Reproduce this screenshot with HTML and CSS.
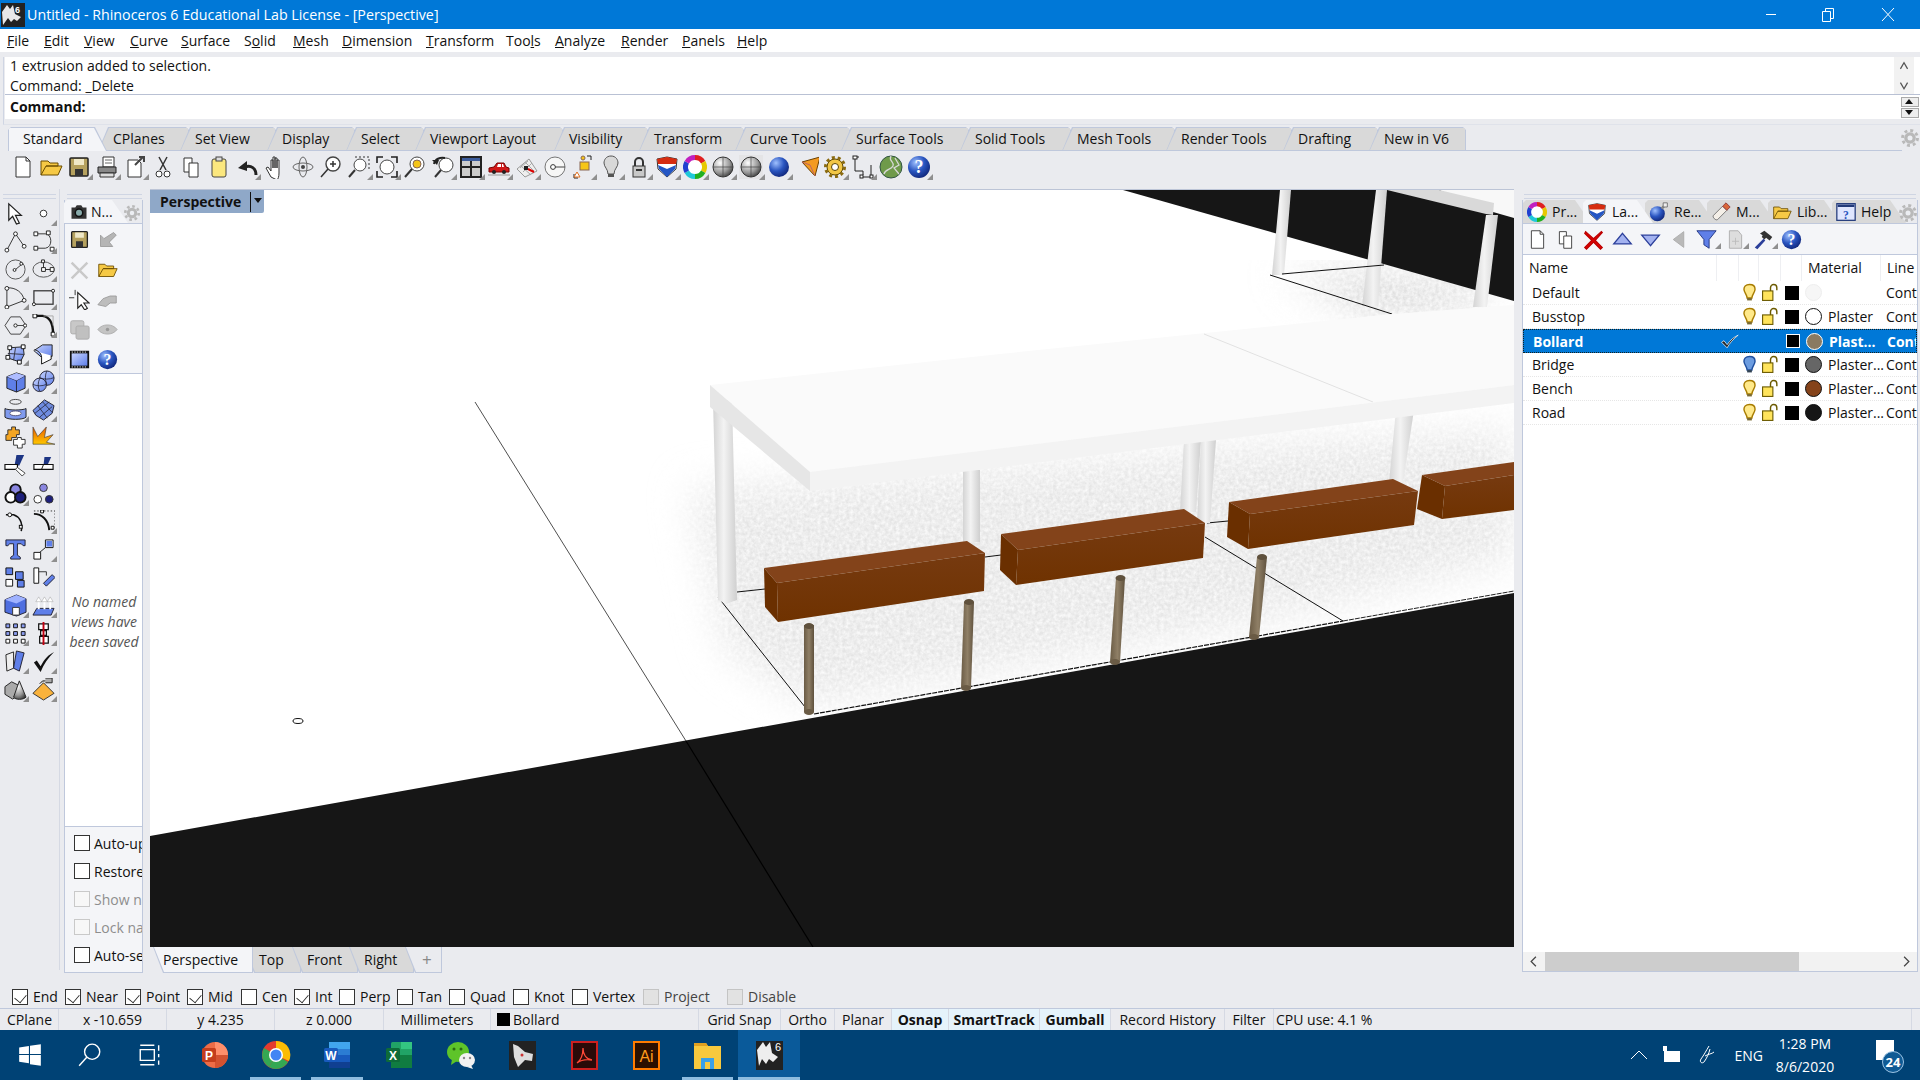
FILE: index.html
```html
<!DOCTYPE html>
<html lang="en">
<head>
<meta charset="utf-8">
<title>Untitled - Rhinoceros 6</title>
<link rel="stylesheet" href="styles.css">
</head>
<body>
<svg class="defs" aria-hidden="true">
<defs>
<radialGradient id="gSph" cx=".35" cy=".3" r=".8"><stop offset="0" stop-color="#9fc0ff"/><stop offset=".5" stop-color="#2a55c0"/><stop offset="1" stop-color="#0c1f70"/></radialGradient>
<radialGradient id="gGray" cx=".35" cy=".3" r=".8"><stop offset="0" stop-color="#fff"/><stop offset=".6" stop-color="#999"/><stop offset="1" stop-color="#333"/></radialGradient>
<linearGradient id="gBlue" x1="0" y1="0" x2="1" y2="1"><stop offset="0" stop-color="#c8d4ff"/><stop offset="1" stop-color="#5f7fe8"/></linearGradient>
<linearGradient id="gOrange" x1="0" y1="0" x2="0" y2="1"><stop offset="0" stop-color="#e85a00"/><stop offset="1" stop-color="#ffc800"/></linearGradient>
<linearGradient id="gPost" x1="0" x2="1" y1="0" y2="0"><stop offset="0" stop-color="#d4d4d4"/><stop offset=".45" stop-color="#f3f3f3"/><stop offset="1" stop-color="#cfcfcf"/></linearGradient>
<linearGradient id="gBench" x1="0" x2="0" y1="0" y2="1"><stop offset="0" stop-color="#763a10"/><stop offset="1" stop-color="#6f3200"/></linearGradient>
<linearGradient id="gPole" x1="0" x2="1" y1="0" y2="0"><stop offset="0" stop-color="#6a5b45"/><stop offset=".5" stop-color="#8f7f66"/><stop offset="1" stop-color="#5f513d"/></linearGradient>
<filter id="soft" x="-30%" y="-30%" width="160%" height="160%"><feGaussianBlur stdDeviation="20" result="b"/><feTurbulence type="fractalNoise" baseFrequency="0.28" numOctaves="3" seed="4" result="n"/><feColorMatrix in="n" type="matrix" values="0 0 0 0 0 0 0 0 0 0 0 0 0 0 0 0 0 0 1.3 0" result="a"/><feComposite in="b" in2="a" operator="in"/></filter>
</defs>
<symbol id="new" viewBox="0 0 24 24"><path d="M5 2h10l4 4v16H5z" fill="#fff" stroke="#333"/><path d="M15 2v4h4" fill="none" stroke="#333"/></symbol>
<symbol id="folder" viewBox="0 0 24 24"><path d="M2 20V6h7l2 2h8v3H7L2 20h17l4-9H7" fill="#f6c945" stroke="#6b4d00"/></symbol>
<symbol id="save" viewBox="0 0 24 24"><rect x="3" y="3" width="18" height="18" rx="1" fill="#b6a25f" stroke="#222" stroke-width="1.5"/><rect x="7" y="4" width="10" height="6" fill="#f0e9c8"/><rect x="8" y="14" width="8" height="7" fill="#333"/></symbol>
<symbol id="print" viewBox="0 0 24 24"><path d="M8 2h11v10H8z" fill="#fff" stroke="#333"/><path d="M3 12h18v6H3z" fill="#888" stroke="#222"/><path d="M5 18h14v4H5z" fill="#ddd" stroke="#333"/><path d="M10 5h7M10 8h7" stroke="#666"/></symbol>
<symbol id="pagearrow" viewBox="0 0 24 24"><path d="M5 5h10l3 3v14H5z" fill="#fff" stroke="#333"/><path d="M12 10l8-8M16 2h5v5" fill="none" stroke="#444" stroke-width="2"/></symbol>
<symbol id="scissors" viewBox="0 0 24 24"><path d="M8 2l7 13M16 2L9 15" stroke="#333" fill="none" stroke-width="1.5"/><circle cx="8" cy="19" r="3" fill="#fff" stroke="#333"/><circle cx="16" cy="19" r="3" fill="#fff" stroke="#333"/></symbol>
<symbol id="copy" viewBox="0 0 24 24"><path d="M5 3h8v14H5z" fill="#fff" stroke="#333"/><path d="M10 8h9v14h-9z" fill="#fff" stroke="#333"/></symbol>
<symbol id="paste" viewBox="0 0 24 24"><rect x="5" y="4" width="14" height="18" rx="2" fill="#fbe77e" stroke="#444"/><rect x="9" y="2" width="6" height="4" fill="#ddd" stroke="#444"/></symbol>
<symbol id="undo" viewBox="0 0 24 24"><path d="M21 20c0-7-5-10-11-8" fill="none" stroke="#222" stroke-width="3"/><path d="M12 6L3 13l9 3z" fill="#222"/></symbol>
<symbol id="hand" viewBox="0 0 24 24"><path d="M8 22l-5-9 2-1 3 4V5h2v8-11h2v11-10h2v10-8h2v13c0 4-1 6-2 7z" fill="#fff" stroke="#333" stroke-linejoin="round"/></symbol>
<symbol id="orbit" viewBox="0 0 24 24"><ellipse cx="12" cy="12" rx="10" ry="4" fill="none" stroke="#666"/><ellipse cx="12" cy="12" rx="4" ry="10" fill="none" stroke="#666"/><circle cx="12" cy="12" r="2" fill="#444"/></symbol>
<symbol id="zoomin" viewBox="0 0 24 24"><circle cx="14" cy="9" r="7" fill="#fff" stroke="#444" stroke-width="1.4"/><path d="M9 14l-7 8M11 9h6M14 6v6" stroke="#333" stroke-width="1.5"/></symbol>
<symbol id="zoomwin" viewBox="0 0 24 24"><circle cx="13" cy="10" r="6" fill="#fff" stroke="#444"/><path d="M8 15l-6 7" stroke="#333" stroke-width="2"/><path d="M8 2h14v12" fill="none" stroke="#333" stroke-dasharray="2 2"/></symbol>
<symbol id="zoomext" viewBox="0 0 24 24"><circle cx="12" cy="12" r="7" fill="#fff" stroke="#444"/><path d="M2 8V2h6M16 2h6v6M22 16v6h-6M8 22H2v-6" fill="none" stroke="#222" stroke-width="1.6"/></symbol>
<symbol id="zoomsel" viewBox="0 0 24 24"><circle cx="14" cy="9" r="7" fill="#fff" stroke="#444"/><circle cx="14" cy="9" r="4" fill="#f5c518" stroke="#865"/><path d="M9 14l-7 8" stroke="#333" stroke-width="2"/></symbol>
<symbol id="undoview" viewBox="0 0 24 24"><circle cx="15" cy="10" r="7" fill="#fff" stroke="#444"/><path d="M10 15l-6 7" stroke="#333" stroke-width="2"/><path d="M3 9c1-5 6-7 11-6" fill="none" stroke="#222" stroke-width="2"/><path d="M1 5l5 5 2-5z" fill="#222"/></symbol>
<symbol id="four" viewBox="0 0 24 24"><rect x="2" y="2" width="20" height="20" fill="#ccc" stroke="#222" stroke-width="2"/><path d="M12 2v20M2 12h20" stroke="#222" stroke-width="2"/><rect x="3" y="3" width="18" height="3" fill="#3c5c9c"/></symbol>
<symbol id="car" viewBox="0 0 24 24"><path d="M2 17v-4l5-1 3-4h7l2 4 3 1v4z" fill="#d01818" stroke="#700"/><path d="M11 9h3v3h-4zM15 9h1l1 3h-2z" fill="#fff"/><circle cx="7" cy="17" r="2" fill="#222"/><circle cx="17" cy="17" r="2" fill="#222"/><path d="M1 20h22" stroke="#999"/></symbol>
<symbol id="gridred" viewBox="0 0 24 24"><path d="M2 14L14 4l8 12-12 6z" fill="#eee" stroke="#999"/><path d="M6 11l10 9M10 7l9 9M8 17l9-9M5 13l8-7" stroke="#aaa"/><rect x="9" y="11" width="4" height="4" fill="#222"/><path d="M13 14l6 3" stroke="#d00" stroke-width="2"/></symbol>
<symbol id="circline" viewBox="0 0 24 24"><circle cx="12" cy="12" r="10" fill="#f6f6f6" stroke="#777"/><path d="M11 12h11" stroke="#444"/><circle cx="10" cy="12" r="2.4" fill="#fff" stroke="#333"/></symbol>
<symbol id="cursel" viewBox="0 0 24 24"><rect x="9" y="7" width="9" height="8" fill="#f5c518" stroke="#865"/><path d="M3 23v-4M3 23h4M16 1h4v4" fill="none" stroke="#222"/><path d="M6 17l3 5H3z" fill="#fff" stroke="#e07020"/><circle cx="12" cy="3" r="2" fill="#f5c518" stroke="#865"/></symbol>
<symbol id="bulbg" viewBox="0 0 24 24"><path d="M12 1c5 0 7 4 7 7 0 4-4 6-4 11H9c0-5-4-7-4-11 0-3 2-7 7-7z" fill="#d8d8d8" stroke="#555"/><rect x="9" y="19" width="6" height="3" fill="#555"/></symbol>
<symbol id="lockg" viewBox="0 0 24 24"><path d="M8 11V7a4 4 0 0 1 8 0v4" fill="none" stroke="#333" stroke-width="2"/><rect x="6" y="11" width="12" height="11" fill="#c8c8c8" stroke="#333"/><rect x="9" y="14" width="6" height="2" fill="#333"/></symbol>
<symbol id="layers" viewBox="0 0 24 24"><path d="M2 4l10-2 10 2-1 10-9 8-9-8z" fill="#fff" stroke="#333"/><path d="M2 4l10-2 10 2-1 5L3 9z" fill="#d62c10"/><path d="M3 10l9 4 9-4-1 4-8 8-8-8z" fill="#2456c4"/></symbol>
<symbol id="wheel" viewBox="0 0 24 24"><circle cx="12" cy="12" r="8.5" fill="#fff"/><g fill="none" stroke-width="5"><path d="M12 2.5a9.5 9.5 0 0 1 8.2 4.7" stroke="#e02020"/><path d="M20.200 7.200a9.500 9.500 0 0 1 0 9.500" stroke="#e6c800"/><path d="M20.200 16.700a9.500 9.500 0 0 1-8.200 4.800" stroke="#20b020"/><path d="M12 21.500a9.500 9.500 0 0 1-8.200-4.800" stroke="#20c8d8"/><path d="M3.800 16.700a9.500 9.500 0 0 1 0-9.500" stroke="#2040d0"/><path d="M3.800 7.200A9.500 9.500 0 0 1 12 2.500" stroke="#c020c0"/></g></symbol>
<symbol id="spg" viewBox="0 0 24 24"><circle cx="12" cy="12" r="10" fill="url(#gGray)" stroke="#333"/><path d="M12 2v20M2 12h20" stroke="#444" stroke-width=".7"/></symbol>
<symbol id="spgg" viewBox="0 0 24 24"><rect x="0" y="0" width="24" height="24" fill="#ddd" opacity=".5"/><circle cx="12" cy="12" r="10" fill="url(#gGray)" stroke="#333"/><path d="M12 2v20M2 12h20" stroke="#444" stroke-width=".7"/></symbol>
<symbol id="spb" viewBox="0 0 24 24"><circle cx="12" cy="12" r="10" fill="url(#gSph)"/></symbol>
<symbol id="bomb" viewBox="0 0 24 24"><circle cx="10" cy="14" r="9" fill="url(#gSph)"/><path d="M15 8l4-4" stroke="#888" stroke-width="3"/><path d="M17 1h5v5h-5z" fill="#eee" stroke="#666"/></symbol>
<symbol id="matl" viewBox="0 0 24 24"><path d="M3 16L14 5l5 5L8 21c-2 2-7-3-5-5z" fill="#f4efe8" stroke="#666"/><path d="M14 5l4-4 5 5-4 4z" fill="#d9663a" stroke="#833"/></symbol>
<symbol id="helpwin" viewBox="0 0 24 24"><rect x="1" y="2" width="22" height="20" fill="#dfe6ff" stroke="#223a7a" stroke-width="1.500"/><rect x="2" y="3" width="20" height="3" fill="#223a7a"/><text x="12" y="20" text-anchor="middle" font-family="Liberation Serif,serif" font-weight="700" font-size="14" fill="#2a55c0">?</text></symbol>
<symbol id="cone" viewBox="-4 0 24 24"><path d="M3 7l18-5-5 19z" fill="#f39a20" stroke="#6b4000"/><path d="M3 7l8 3 5 11" fill="none" stroke="#b66"/></symbol>
<symbol id="gear" viewBox="0 0 24 24"><circle cx="12" cy="12" r="8" fill="#f2c644" stroke="#5a4500"/><circle cx="12" cy="12" r="9.500" fill="none" stroke="#8a6a10" stroke-width="3" stroke-dasharray="3 2.900"/><circle cx="12" cy="12" r="3.500" fill="#fff" stroke="#5a4500"/></symbol>
<symbol id="gearg" viewBox="0 0 24 24"><circle cx="12" cy="12" r="7" fill="#b9b9b9"/><circle cx="12" cy="12" r="9" fill="none" stroke="#b9b9b9" stroke-width="3.500" stroke-dasharray="3.500 3.570"/><circle cx="12" cy="12" r="3" fill="#eceef2"/></symbol>
<symbol id="dim" viewBox="0 0 24 24"><path d="M4 2v14M4 2h4M10 22h12M20 10v12M4 16h8v4" fill="none" stroke="#222"/><rect x="2" y="1" width="4" height="3" fill="#fff" stroke="#222"/><rect x="9" y="20" width="3" height="3" fill="#fff" stroke="#222"/><rect x="19" y="20" width="3" height="3" fill="#fff" stroke="#222"/></symbol>
<symbol id="globe" viewBox="0 0 24 24"><circle cx="12" cy="12" r="11" fill="#6f9a4a" stroke="#354"/><path d="M12 1c-3 5 4 6 2 10s-8 3-9 8M16 3l4 7-5 3 5 6" fill="none" stroke="#d8d8d8" stroke-width="1.300"/></symbol>
<symbol id="help" viewBox="0 0 24 24"><circle cx="12" cy="12" r="11" fill="url(#gSph)"/><text x="12" y="18" text-anchor="middle" font-family="Liberation Serif,serif" font-weight="700" font-size="18" fill="#fff">?</text></symbol>
<symbol id="arrow" viewBox="0 0 24 24"><path d="M5 2v17l4-4 4 8 3-1-4-8h6z" fill="#fff" stroke="#222" stroke-width="1.300"/></symbol>
<symbol id="pt" viewBox="0 0 24 24"><circle cx="12" cy="12" r="3.500" fill="#fff" stroke="#333"/></symbol>
<symbol id="polyline" viewBox="0 0 24 24"><path d="M3 21l9-17 9 13" fill="none" stroke="#333"/><circle cx="3" cy="21" r="2" fill="#fff" stroke="#222"/><circle cx="12" cy="4" r="2" fill="#fff" stroke="#222"/><circle cx="21" cy="17" r="2" fill="#fff" stroke="#222"/></symbol>
<symbol id="curve" viewBox="0 0 24 24"><path d="M4 4h10c7 0 8 14 0 15H4" fill="none" stroke="#333"/><path d="M2 2h4v4H2zM15 1h4v4h-4zM2 17h4v4H2zM19 18h4v4h-4z" fill="#fff" stroke="#222"/></symbol>
<symbol id="circle" viewBox="0 0 24 24"><circle cx="12" cy="12" r="10" fill="none" stroke="#555"/><path d="M12 12l6-5" stroke="#333"/><circle cx="11" cy="12.500" r="1.500" fill="#fff" stroke="#222"/><circle cx="18" cy="6" r="1.500" fill="#fff" stroke="#222"/></symbol>
<symbol id="ellipse" viewBox="0 0 24 24"><ellipse cx="12" cy="12" rx="11" ry="8" fill="none" stroke="#555"/><path d="M12 4v8h9" fill="none" stroke="#333"/><path d="M10 2h3v3h-3zM10 10h4v4h-4zM19 10h4v4h-4z" fill="#fff" stroke="#222"/></symbol>
<symbol id="arc" viewBox="0 0 24 24"><path d="M3 2c9-1 17 5 18 13L3 22z" fill="none" stroke="#333"/><circle cx="3" cy="2.500" r="2" fill="#fff" stroke="#222"/><circle cx="21" cy="15" r="2" fill="#fff" stroke="#222"/><circle cx="3" cy="22" r="2" fill="#fff" stroke="#222"/></symbol>
<symbol id="rect" viewBox="0 0 24 24"><rect x="2" y="5" width="20" height="14" fill="none" stroke="#333" stroke-width="1.300"/><circle cx="2" cy="19" r="1.600" fill="#fff" stroke="#222"/><circle cx="22" cy="5" r="1.600" fill="#fff" stroke="#222"/></symbol>
<symbol id="hex" viewBox="0 0 24 24"><path d="M7 3h10l6 9-6 9H7L1 12z" fill="none" stroke="#444"/><path d="M12 12h10" stroke="#444"/><circle cx="12" cy="12" r="1.700" fill="#fff" stroke="#222"/><circle cx="22" cy="12" r="1.700" fill="#fff" stroke="#222"/></symbol>
<symbol id="fillet" viewBox="0 0 24 24"><path d="M3 2h8c8 1 11 9 11 19" fill="none" stroke="#111" stroke-width="2.500"/><path d="M12 2h10v10" fill="none" stroke="#aaa"/><path d="M1 0h4v4H1zM20 19h4v4h-4z" fill="#fff" stroke="#111"/></symbol>
<symbol id="srf" viewBox="0 0 24 24"><path d="M6 6l14-1 1 8-4 8-12-4z" fill="url(#gBlue)" stroke="#222"/><path d="M12 6l-2 13M4 12l17 1" stroke="#334"/><path d="M4 4h4v4H4zM18 3h4v4h-4zM2 14h4v4H2zM14 19h4v4h-4z" fill="#fff" stroke="#111"/></symbol>
<symbol id="patch" viewBox="0 0 24 24"><path d="M2 9l9-6h10v12l-11 1z" fill="url(#gBlue)" stroke="#222"/><path d="M2 9c0-2 8 1 8 7v7l10-5V14" fill="#fff" stroke="#111"/></symbol>
<symbol id="box" viewBox="0 0 24 24"><path d="M3 7l10-4 9 3v13l-9 4-10-4z" fill="#5f7fe8" stroke="#222"/><path d="M3 7l10 4 9-5M13 11v12" fill="none" stroke="#223"/><path d="M3 7l10-4 9 3-9 5z" fill="#aebcff"/></symbol>
<symbol id="spheres" viewBox="0 0 24 24"><circle cx="15.500" cy="8.500" r="7.500" fill="url(#gBlue)" stroke="#223"/><circle cx="8" cy="15.500" r="7" fill="url(#gBlue)" stroke="#223"/><path d="M1 15c4 2 10 2 14 0M8 9c-2 4-2 9 0 13M8 8c4 2 10 2 15 0M15.500 1c-2 4-2 9 0 14" fill="none" stroke="#223" stroke-width=".8"/></symbol>
<symbol id="cyl" viewBox="0 0 24 24"><ellipse cx="12" cy="4" rx="6" ry="2.500" fill="none" stroke="#444"/><path d="M1 11c3 2 19 2 22 0v9c-3 3-19 3-22 0z" fill="#7f9aee" stroke="#222"/><ellipse cx="12" cy="16" rx="6" ry="2.500" fill="#fff" stroke="#557"/></symbol>
<symbol id="mesh" viewBox="0 0 24 24"><path d="M1 13L13 2l10 6-2 8-9 7-8-5z" fill="#6f8ce0" stroke="#223"/><path d="M6 8l10 13M11 4l10 11M3 16L18 4M8 20L21 9" stroke="#223" stroke-width=".8"/></symbol>
<symbol id="puzzle" viewBox="0 0 24 24"><path d="M4 4h4V1h4v3h4v5h-3v3H8v3H2V9h2z" fill="#f5a623" stroke="#333"/><path d="M10 14h4v-2h4v2h4v5h-3v4h-5v-3h-4z" fill="#fff" stroke="#333"/></symbol>
<symbol id="explode" viewBox="0 0 24 24"><path d="M1 1l5 10 9-10-2 11 9-3-7 8 9 2H1z" fill="url(#gOrange)" stroke="#333" stroke-width=".6"/></symbol>
<symbol id="trim" viewBox="0 0 24 24"><path d="M13 1h8l-5 11h-5z" fill="#1d3584"/><path d="M1 11h13v5H1z" fill="#fff" stroke="#111" stroke-width="1.200"/><path d="M14 14l8 6-3 3-7-7z" fill="#fff" stroke="#444"/></symbol>
<symbol id="split" viewBox="0 0 24 24"><path d="M13 3h7l-4 9h-4z" fill="#1d3584"/><path d="M2 11h20v5H2z" fill="#fff" stroke="#111" stroke-width="1.200"/><path d="M12 11l-2 5" stroke="#111"/></symbol>
<symbol id="group" viewBox="0 0 24 24"><circle cx="12" cy="8" r="5.500" fill="#8a86e0" stroke="#111" stroke-width="2"/><circle cx="7" cy="16" r="5.500" fill="#fff" stroke="#111" stroke-width="2"/><circle cx="17" cy="16" r="5.500" fill="#1d1f7a" stroke="#111" stroke-width="2"/></symbol>
<symbol id="ungroup" viewBox="0 0 24 24"><circle cx="12" cy="6" r="4" fill="#8a86e0" stroke="#333"/><circle cx="6" cy="18" r="4" fill="#fff" stroke="#333"/><circle cx="18" cy="18" r="4" fill="#1d1f7a" stroke="#333"/></symbol>
<symbol id="fcurve" viewBox="0 0 24 24"><path d="M2 5h8c6 2 10 8 8 17" fill="none" stroke="#111" stroke-width="1.600"/><circle cx="6" cy="5" r="2" fill="#fff" stroke="#111"/><rect x="16" y="16" width="3" height="3" fill="#fff" stroke="#111"/></symbol>
<symbol id="chamfer" viewBox="0 0 24 24"><path d="M2 4c8 0 15 6 16 17" fill="none" stroke="#111" stroke-width="2"/><path d="M2 1h22v20" fill="none" stroke="#333" stroke-dasharray="1.500 2"/><path d="M9 0h3v3H9zM20 17h3v3h-3z" fill="#fff" stroke="#111"/></symbol>
<symbol id="txt" viewBox="0 0 24 24"><path d="M2 2h20v6h-2l-2-2h-4v12l3 2v2H7v-2l3-2V6H6L4 8H2z" fill="#5f7fe8" stroke="#223"/></symbol>
<symbol id="scale" viewBox="0 0 24 24"><path d="M2 15h7v7H2zM14 2h8v8h-8z" fill="#fff" stroke="#111"/><rect x="15" y="3" width="6" height="6" fill="#5f7fe8"/><path d="M8 15l6-5" stroke="#222"/></symbol>
<symbol id="array" viewBox="0 0 24 24"><path d="M2 2h7v7H2zM12 6h8v8h-8z" fill="#5f7fe8" stroke="#111"/><path d="M2 14h7v7H2z" fill="#fff" stroke="#111"/><path d="M14 15h7v7h-7z" fill="#5f7fe8" stroke="#111"/></symbol>
<symbol id="rotate" viewBox="0 0 24 24"><path d="M2 2h5v16H2z" fill="#fff" stroke="#111"/><path d="M15 21l-3-3 9-9 3 3z" fill="#5f7fe8" stroke="#223"/><path d="M7 6h8v4" fill="none" stroke="#333"/></symbol>
<symbol id="boxbite" viewBox="0 0 24 24"><path d="M1 6l12-5 10 4v14l-10 4-12-4z" fill="#4f6fe0" stroke="#223"/><path d="M1 6l12 4 10-5-10-4z" fill="#9fb2ff"/><path d="M9 14h7v8H9z" fill="#fff" stroke="#333"/></symbol>
<symbol id="extrude" viewBox="0 0 24 24"><path d="M1 22l4-7h18l-3 7z" fill="#5f7fe8" stroke="#223"/><path d="M7 16V7M13 16V7M19 16V7" stroke="#fff" stroke-width="2"/><path d="M4 8l3-5 3 5zM10 8l3-5 3 5zM16 8l3-5 3 5z" fill="#fff" stroke="#888" stroke-width=".4"/></symbol>
<symbol id="dots" viewBox="0 0 24 24"><g fill="#8a9cf0" stroke="#111"><path d="M2 2h4v4H2zM10 2h4v4h-4zM18 2h4v4h-4zM2 10h4v4H2zM10 10h4v4h-4zM18 10h4v4h-4z"/></g><g fill="#fff" stroke="#111"><path d="M2 18h4v4H2zM10 18h4v4h-4zM18 18h4v4h-4z"/></g></symbol>
<symbol id="mirror" viewBox="0 0 24 24"><path d="M7 2h10v6H7zM9 9h6v5H9zM8 15h9v7H8z" fill="#fff" stroke="#111" stroke-width="1.300"/><path d="M12 0v24" stroke="#c00010" stroke-width="2"/></symbol>
<symbol id="xray" viewBox="0 0 24 24"><path d="M2 5l8-3v17l-7 3z" fill="#eee" stroke="#222"/><path d="M13 1l8 2-5 19-6-3z" fill="#5f7fe8" stroke="#223"/></symbol>
<symbol id="check" viewBox="0 0 24 24"><path d="M2 13l3-2 4 6C13 9 17 5 23 2 17 8 12 15 9 23z" fill="#111"/></symbol>
<symbol id="prims" viewBox="0 0 24 24"><path d="M1 9l7-5 8 4v9l-7 5-8-5z" fill="#aaa" stroke="#222"/><path d="M16 3l7 17c-3 3-11 3-13 0z" fill="url(#gGray)" stroke="#222"/></symbol>
<symbol id="pyr" viewBox="0 0 24 24"><path d="M12 5L1 16l11 7 11-7z" fill="#f9b23c" stroke="#333"/><path d="M8 6l3-3h3M14 0h7v5h-7" fill="#aaa" stroke="#222"/></symbol>
<symbol id="saveg" viewBox="0 0 24 24"><path d="M19 4l3 3-8 8 4 5H4V7l4 4z" fill="#b5b5b5" stroke="#9a9a9a"/></symbol>
<symbol id="xg" viewBox="0 0 24 24"><path d="M4 3l8 8 8-8 2 2-8 8 8 8-2 2-8-8-8 8-2-2 8-8-8-8z" fill="#c9c9c9"/></symbol>
<symbol id="pick" viewBox="0 0 24 24"><path d="M10 4v18l4-4 4 6 3-2-4-6h6z" fill="#fff" stroke="#222" stroke-width="1.300"/><path d="M0 10h6M7 1v6" stroke="#222"/></symbol>
<symbol id="handg" viewBox="0 0 24 24"><path d="M1 18l6-7 8-3h7v8h-7l-5 4z" fill="#bdbdbd" stroke="#999"/></symbol>
<symbol id="squares" viewBox="0 0 24 24"><rect x="2" y="2" width="15" height="15" rx="2" fill="#c8c8c8" stroke="#aaa"/><rect x="8" y="8" width="15" height="15" rx="2" fill="#c0c0c0" stroke="#aaa"/></symbol>
<symbol id="eye" viewBox="0 0 24 24"><path d="M1 12c5-7 17-7 22 0-5 7-17 7-22 0z" fill="#c4c4c4" stroke="#aaa"/><circle cx="12" cy="12" r="2" fill="#999"/></symbol>
<symbol id="film" viewBox="0 0 24 24"><rect x="1" y="2" width="22" height="20" fill="#111"/><rect x="3" y="5" width="18" height="14" fill="url(#gBlue)"/><path d="M3 3.500h18M3 20.500h18" stroke="#fff" stroke-dasharray="1.500 1.500"/></symbol>
<symbol id="cam" viewBox="0 0 24 24"><path d="M2 6h5l2-3h6l2 3h5v15H2z" fill="#333"/><circle cx="12" cy="13" r="5" fill="#8aa" stroke="#111" stroke-width="2"/></symbol>
<symbol id="xred" viewBox="0 0 24 24"><path d="M3 3l9 8 9-8 1 1-8 9 8 8-2 2-8-8-8 8-2-2 8-8-8-8z" fill="#d00" stroke="#b00" stroke-width="1.400"/></symbol>
<symbol id="up" viewBox="0 0 24 24"><path d="M12 5l10 12H2z" fill="#a3b2f0" stroke="#2b3f9a" stroke-width="1.500"/></symbol>
<symbol id="down" viewBox="0 0 24 24"><path d="M12 19L2 7h20z" fill="#a3b2f0" stroke="#2b3f9a" stroke-width="1.500"/></symbol>
<symbol id="leftg" viewBox="0 0 24 24"><path d="M6 12L18 3v18z" fill="#b9b9b9" stroke="#aaa"/></symbol>
<symbol id="filter" viewBox="0 0 24 24"><path d="M1 2h22l-8 10v10l-6-4v-6z" fill="#5f7fe8" stroke="#1b2f7a"/></symbol>
<symbol id="pageg" viewBox="0 0 24 24"><path d="M5 2h10l4 5v15H5z" fill="#ddd" stroke="#aaa"/><path d="M12 10v8M8 14h8" stroke="#bbb"/></symbol>
<symbol id="hammer" viewBox="0 0 24 24"><path d="M2 21l10-10 2 2L5 23z" fill="#2b3f9a"/><path d="M8 5l5-3 9 7-3 4-4-3-2 2-3-3 1-2z" fill="#333"/></symbol>
<symbol id="bulby" viewBox="0 0 24 24"><path d="M12 2c5 0 7 3 7 6 0 4-4 7-4 11H9c0-4-4-7-4-11 0-3 2-6 7-6z" fill="#ffe98a" stroke="#a87c00" stroke-width="1.800"/><rect x="9" y="19" width="6" height="3" fill="#7a6a30"/></symbol>
<symbol id="bulbb" viewBox="0 0 24 24"><path d="M12 2c5 0 7 3 7 6 0 4-4 7-4 11H9c0-4-4-7-4-11 0-3 2-6 7-6z" fill="#6c9ce0" stroke="#1f4f9f" stroke-width="1.800"/><rect x="9" y="19" width="6" height="3" fill="#345"/></symbol>
<symbol id="locky" viewBox="0 0 24 24"><rect x="2" y="10" width="13" height="12" fill="#ffe45c" stroke="#6b5a00" stroke-width="1.400"/><path d="M12 10V6a4 4 0 0 1 8 0v3" fill="none" stroke="#6b5a00" stroke-width="1.800"/></symbol>
<symbol id="okw" viewBox="0 0 24 24"><path d="M2 13l3-2 4 5C13 10 18 6 23 4 17 9 12 14 9 20z" fill="#222" stroke="#fff" stroke-width=".9"/></symbol>
</svg>

<header class="title">
  <svg class="app-ico" viewBox="0 0 24 24"><rect width="24" height="24" fill="#222"/><path d="M2 22L1 9l5-7 3 4 3-4 2 9 6 3-4 4-3-2-3 3-3-4z" fill="#e8e8e8"/><text x="14" y="10" font-size="9" font-family="Liberation Sans,sans-serif" font-weight="700" fill="#fff">6</text></svg>
  <span class="title-text">Untitled - Rhinoceros 6 Educational Lab License - [Perspective]</span>
  <div class="win">
    <svg viewBox="0 0 49 29"><path d="M17 14.500h10" stroke="#fff"/></svg>
    <svg viewBox="0 0 60 29"><path d="M24.500 11.500h8v10h-8zM27.500 11.500v-3h8v10h-3" fill="none" stroke="#fff"/></svg>
    <svg viewBox="0 0 60 29"><path d="M24 8l12 13M36 8L24 21" stroke="#fff" fill="none"/></svg>
  </div>
</header>

<nav class="menu">
  <span><u>F</u>ile</span><span><u>E</u>dit</span><span><u>V</u>iew</span><span><u>C</u>urve</span><span><u>S</u>urface</span><span>S<u>o</u>lid</span><span><u>M</u>esh</span><span><u>D</u>imension</span><span><u>T</u>ransform</span><span>Too<u>l</u>s</span><span><u>A</u>nalyze</span><span><u>R</u>ender</span><span><u>P</u>anels</span><span><u>H</u>elp</span>
</nav>

<section class="cmd">
  <div class="hist">
    <div class="hist-text"><div>1 extrusion added to selection.</div><div>Command: _Delete</div></div>
    <div class="hist-scroll"><svg viewBox="0 0 14 14"><path d="M3 10l4-7 4 7" fill="none" stroke="#555" stroke-width="1.400"/></svg><svg viewBox="0 0 14 14"><path d="M3 4l4 7 4-7" fill="none" stroke="#555" stroke-width="1.400"/></svg></div>
  </div>
  <div class="prompt">
    <b>Command:</b>
    <div class="spin"><i class="sp-u"></i><i class="sp-d"></i></div>
  </div>
</section>

<div class="tabs-row">
  <div class="tabs">
    <span class="tab on">Standard</span><span class="tab">CPlanes</span><span class="tab">Set View</span><span class="tab">Display</span><span class="tab">Select</span><span class="tab">Viewport Layout</span><span class="tab">Visibility</span><span class="tab">Transform</span><span class="tab">Curve Tools</span><span class="tab">Surface Tools</span><span class="tab">Solid Tools</span><span class="tab">Mesh Tools</span><span class="tab">Render Tools</span><span class="tab">Drafting</span><span class="tab last">New in V6</span>
  </div>
  <svg class="tabs-gear"><use href="#gearg"/></svg>
</div>

<div class="tools">
  <span class="t"><svg><use href="#new"/></svg></span><span class="t"><svg><use href="#folder"/></svg></span><span class="t f"><svg><use href="#save"/></svg></span><span class="t f"><svg><use href="#print"/></svg></span><span class="t f"><svg><use href="#pagearrow"/></svg></span><span class="t"><svg><use href="#scissors"/></svg></span><span class="t"><svg><use href="#copy"/></svg></span><span class="t"><svg><use href="#paste"/></svg></span><span class="t f"><svg><use href="#undo"/></svg></span><span class="t"><svg><use href="#hand"/></svg></span><span class="t"><svg><use href="#orbit"/></svg></span><span class="t"><svg><use href="#zoomin"/></svg></span><span class="t f"><svg><use href="#zoomwin"/></svg></span><span class="t f"><svg><use href="#zoomext"/></svg></span><span class="t"><svg><use href="#zoomsel"/></svg></span><span class="t f"><svg><use href="#undoview"/></svg></span><span class="t f"><svg><use href="#four"/></svg></span><span class="t f"><svg><use href="#car"/></svg></span><span class="t f"><svg><use href="#gridred"/></svg></span><span class="t"><svg><use href="#circline"/></svg></span><span class="t f"><svg><use href="#cursel"/></svg></span><span class="t f"><svg><use href="#bulbg"/></svg></span><span class="t f"><svg><use href="#lockg"/></svg></span><span class="t f"><svg><use href="#layers"/></svg></span><span class="t f"><svg><use href="#wheel"/></svg></span><span class="t f"><svg><use href="#spg"/></svg></span><span class="t f"><svg><use href="#spgg"/></svg></span><span class="t f"><svg><use href="#spb"/></svg></span><span class="t"><svg><use href="#cone"/></svg></span><span class="t f"><svg><use href="#gear"/></svg></span><span class="t f"><svg><use href="#dim"/></svg></span><span class="t"><svg><use href="#globe"/></svg></span><span class="t f"><svg><use href="#help"/></svg></span>
</div>

<main class="work">
  <aside class="side">
    <span class="t"><svg><use href="#arrow"/></svg></span><span class="t f"><svg><use href="#pt"/></svg></span>
    <span class="t"><svg><use href="#polyline"/></svg></span><span class="t f"><svg><use href="#curve"/></svg></span>
    <span class="t f"><svg><use href="#circle"/></svg></span><span class="t f"><svg><use href="#ellipse"/></svg></span>
    <span class="t f"><svg><use href="#arc"/></svg></span><span class="t f"><svg><use href="#rect"/></svg></span>
    <span class="t f"><svg><use href="#hex"/></svg></span><span class="t f"><svg><use href="#fillet"/></svg></span>
    <span class="t f"><svg><use href="#srf"/></svg></span><span class="t f"><svg><use href="#patch"/></svg></span>
    <span class="t f"><svg><use href="#box"/></svg></span><span class="t f"><svg><use href="#spheres"/></svg></span>
    <span class="t f"><svg><use href="#cyl"/></svg></span><span class="t f"><svg><use href="#mesh"/></svg></span>
    <span class="t"><svg><use href="#puzzle"/></svg></span><span class="t"><svg><use href="#explode"/></svg></span>
    <span class="t"><svg><use href="#trim"/></svg></span><span class="t"><svg><use href="#split"/></svg></span>
    <span class="t f"><svg><use href="#group"/></svg></span><span class="t"><svg><use href="#ungroup"/></svg></span>
    <span class="t"><svg><use href="#fcurve"/></svg></span><span class="t f"><svg><use href="#chamfer"/></svg></span>
    <span class="t"><svg><use href="#txt"/></svg></span><span class="t f"><svg><use href="#scale"/></svg></span>
    <span class="t"><svg><use href="#array"/></svg></span><span class="t"><svg><use href="#rotate"/></svg></span>
    <span class="t f"><svg><use href="#boxbite"/></svg></span><span class="t f"><svg><use href="#extrude"/></svg></span>
    <span class="t f"><svg><use href="#dots"/></svg></span><span class="t f"><svg><use href="#mirror"/></svg></span>
    <span class="t f"><svg><use href="#xray"/></svg></span><span class="t f"><svg><use href="#check"/></svg></span>
    <span class="t f"><svg><use href="#prims"/></svg></span><span class="t f"><svg><use href="#pyr"/></svg></span>
  </aside>

  <section class="views">
    <div class="p-head">
      <span class="ptab rslant"><svg><use href="#cam"/></svg><span>N...</span></span>
      <svg class="p-gear"><use href="#gearg"/></svg>
    </div>
    <div class="v-tools">
      <span class="t"><svg><use href="#save"/></svg></span><span class="t"><svg><use href="#saveg"/></svg></span>
      <span class="t"><svg><use href="#xg"/></svg></span><span class="t"><svg><use href="#folder"/></svg></span>
      <span class="t"><svg><use href="#pick"/></svg></span><span class="t"><svg><use href="#handg"/></svg></span>
      <span class="t"><svg><use href="#squares"/></svg></span><span class="t"><svg><use href="#eye"/></svg></span>
      <span class="t"><svg><use href="#film"/></svg></span><span class="t"><svg><use href="#help"/></svg></span>
    </div>
    <div class="v-list"><em>No named views have been saved</em></div>
    <div class="v-opts">
      <label class="opt"><i class="box"></i><span>Auto-update</span></label>
      <label class="opt"><i class="box"></i><span>Restore</span></label>
      <label class="opt off"><i class="box"></i><span>Show named</span></label>
      <label class="opt off"><i class="box"></i><span>Lock named</span></label>
      <label class="opt"><i class="box"></i><span>Auto-set</span></label>
    </div>
  </section>

  <section class="center">
    <div class="vp">
      <svg class="scene" viewBox="150 190 1364 757">
        <rect x="150" y="190" width="1364" height="757" fill="#fff"/>
        <clipPath id="ground"><path d="M150 190H1514V593L150 836z"/></clipPath>
        <g clip-path="url(#ground)">
          <path d="M690 490L1300 440 1514 430V560L1250 625 810 705 725 650z" fill="#e4e4e4" filter="url(#soft)"/>
          <path d="M1280 272L1490 285 1480 306 1370 312z" fill="#c8c8c8" filter="url(#soft)"/>
        </g>
        <path d="M150 836L1514 593V947H150z" fill="#161616"/>
        <path d="M1123 190H1514V301z" fill="#161616"/>
        <path d="M1439 190H1514V218L1493 212z" fill="#f8f8f8"/>
        <path d="M1387 190L1439 190 1494 203 1493 215 1486 214z" fill="#d9d9d9"/>
        <path d="M1280 190H1291L1284 275H1272z" fill="url(#gPost)"/>
        <path d="M1376 190H1387L1378 306H1362z" fill="url(#gPost)"/>
        <path d="M1486 215H1498L1487 307H1473z" fill="url(#gPost)"/>
        <path d="M1270 275L1392 314M1282 274L1384 265" stroke="#111" stroke-width="1" fill="none"/>
        <path d="M475 402L686 741" stroke="#222" stroke-width=".8" fill="none"/>
        <path d="M686 741L813 947" stroke="#000" stroke-width="1.200" fill="none"/>
        <ellipse cx="298" cy="721" rx="5" ry="2.500" fill="none" stroke="#111"/>
        <path d="M718 597L805 707M737 592L765 589M985 557L1001 555M1207 523L1228 521M1205 537L1343 621" stroke="#111" stroke-width="1" fill="none"/>
        <path d="M814 714L1343 621" stroke="#111" stroke-width="1.200" stroke-dasharray="5 1" fill="none"/>
        <path d="M1343 621L1514 591" stroke="#222" stroke-width="1" stroke-dasharray="5 1" fill="none"/>
        <path d="M713 400H732L737 600 726 604 718 600z" fill="url(#gPost)"/>
        <path d="M963 470H980V542H963z" fill="url(#gPost)"/>
        <path d="M1184 440H1201L1196 512H1180z" fill="url(#gPost)"/>
        <path d="M1201 440H1216L1210 523H1197z" fill="url(#gPost)"/>
        <path d="M1396 410H1414L1403 482H1389z" fill="url(#gPost)"/>
        <path d="M710 385L1000 354 1392 314 1514 305V385L810 472z" fill="#fafafa"/>
        <path d="M1204 334L1373 402" stroke="#e2e2e2" fill="none"/>
        <path d="M710 385L810 472V491L710 407z" fill="#e6e6e6"/>
        <path d="M810 472L1514 385V403L810 491z" fill="#f3f3f3"/>
        <path d="M764 568L967 541 985 553 777 583z" fill="#83431a"/>
        <path d="M777 583L985 553 984 591 778 622z" fill="url(#gBench)"/>
        <path d="M764 568L777 583 778 622 765 607z" fill="#6a2f00"/>
        <path d="M1001 534L1184 509 1205 523 1018 550z" fill="#83431a"/>
        <path d="M1018 550L1205 523 1203 558 1016 585z" fill="url(#gBench)"/>
        <path d="M1001 534L1018 550 1016 585 1000 570z" fill="#6a2f00"/>
        <path d="M1229 502L1393 479 1418 491 1250 514z" fill="#83431a"/>
        <path d="M1250 514L1418 491 1414 525 1248 549z" fill="url(#gBench)"/>
        <path d="M1229 502L1250 514 1248 549 1227 537z" fill="#6a2f00"/>
        <path d="M1422 475L1514 462V475L1445 486z" fill="#83431a"/>
        <path d="M1445 486L1514 475V510L1442 519z" fill="url(#gBench)"/>
        <path d="M1422 475L1445 486 1442 519 1417 509z" fill="#6a2f00"/>
        <path d="M804 625H814V712L804 712z" fill="url(#gPole)"/>
        <ellipse cx="809" cy="626" rx="5" ry="3" fill="#5f513d"/><ellipse cx="809" cy="712" rx="5" ry="3" fill="#6a5b45"/>
        <path d="M964 602H974L971 688H961z" fill="url(#gPole)"/>
        <ellipse cx="969" cy="602" rx="5" ry="3" fill="#5f513d"/><ellipse cx="966" cy="688" rx="5" ry="3" fill="#6a5b45"/>
        <path d="M1116 578H1125L1120 662H1110z" fill="url(#gPole)"/>
        <ellipse cx="1120.500" cy="578" rx="5" ry="3" fill="#5f513d"/><ellipse cx="1115" cy="662" rx="5" ry="3" fill="#6a5b45"/>
        <path d="M1257 557H1267L1259 637H1249z" fill="url(#gPole)"/>
        <ellipse cx="1262" cy="557" rx="5" ry="3" fill="#5f513d"/><ellipse cx="1254" cy="637" rx="5" ry="3" fill="#6a5b45"/>
      </svg>
      <div class="vp-tag"><b>Perspective</b><span class="vp-drop"></span></div>
    </div>
    <div class="vtabs">
      <span class="vtab on">Perspective</span><span class="vtab">Top</span><span class="vtab">Front</span><span class="vtab">Right</span><span class="vtab plus">+</span>
    </div>
  </section>

  <aside class="layers">
    <div class="l-head">
      <span class="ltab rslant"><svg><use href="#wheel"/></svg><span>Pr...</span></span>
      <span class="ltab rslant on"><svg><use href="#layers"/></svg><span>La...</span></span>
      <span class="ltab rslant"><svg><use href="#bomb"/></svg><span>Re...</span></span>
      <span class="ltab rslant"><svg><use href="#matl"/></svg><span>M...</span></span>
      <span class="ltab rslant"><svg><use href="#folder"/></svg><span>Lib...</span></span>
      <span class="ltab rslant"><svg><use href="#helpwin"/></svg><span>Help</span></span>
      <svg class="l-gear"><use href="#gearg"/></svg>
    </div>
    <div class="l-tools">
      <span class="t"><svg><use href="#new"/></svg></span><span class="t"><svg><use href="#copy"/></svg></span><span class="t"><svg><use href="#xred"/></svg></span><span class="t"><svg><use href="#up"/></svg></span><span class="t"><svg><use href="#down"/></svg></span><span class="t"><svg><use href="#leftg"/></svg></span><span class="t f"><svg><use href="#filter"/></svg></span><span class="t f"><svg><use href="#pageg"/></svg></span><span class="t f"><svg><use href="#hammer"/></svg></span><span class="t"><svg><use href="#help"/></svg></span>
    </div>
    <div class="l-body">
      <div class="row hdr"><span>Name</span><span></span><span></span><span></span><span></span><span class="mat-h">Material</span><span>Line</span></div>
      <div class="row"><span class="nm">Default</span><span></span><svg class="c"><use href="#bulby"/></svg><svg class="c"><use href="#locky"/></svg><i class="sw"></i><span class="mat"><i class="dot d-none"></i></span><span class="ln">Cont</span></div>
      <div class="row"><span class="nm">Busstop</span><span></span><svg class="c"><use href="#bulby"/></svg><svg class="c"><use href="#locky"/></svg><i class="sw"></i><span class="mat"><i class="dot d-white"></i><span>Plaster</span></span><span class="ln">Cont</span></div>
      <div class="row sel"><span class="nm">Bollard</span><svg class="c"><use href="#okw"/></svg><span></span><span></span><i class="sw"></i><span class="mat"><i class="dot d-tan"></i><span>Plast...</span></span><span class="ln">Cont</span></div>
      <div class="row"><span class="nm">Bridge</span><span></span><svg class="c"><use href="#bulbb"/></svg><svg class="c"><use href="#locky"/></svg><i class="sw"></i><span class="mat"><i class="dot d-gray"></i><span>Plaster...</span></span><span class="ln">Cont</span></div>
      <div class="row"><span class="nm">Bench</span><span></span><svg class="c"><use href="#bulby"/></svg><svg class="c"><use href="#locky"/></svg><i class="sw"></i><span class="mat"><i class="dot d-brown"></i><span>Plaster...</span></span><span class="ln">Cont</span></div>
      <div class="row"><span class="nm">Road</span><span></span><svg class="c"><use href="#bulby"/></svg><svg class="c"><use href="#locky"/></svg><i class="sw"></i><span class="mat"><i class="dot d-black"></i><span>Plaster...</span></span><span class="ln">Cont</span></div>
    </div>
    <div class="hscroll">
      <svg viewBox="0 0 22 20"><path d="M13 5l-5 5 5 5" fill="none" stroke="#444" stroke-width="1.300"/></svg>
      <div class="thumb-track"><div class="thumb"></div></div>
      <svg viewBox="0 0 22 20"><path d="M9 5l5 5-5 5" fill="none" stroke="#444" stroke-width="1.300"/></svg>
    </div>
  </aside>
</main>

<div class="osnap">
  <label class="os on"><i class="box"></i>End</label><label class="os on"><i class="box"></i>Near</label><label class="os on"><i class="box"></i>Point</label><label class="os on"><i class="box"></i>Mid</label><label class="os"><i class="box"></i>Cen</label><label class="os on"><i class="box"></i>Int</label><label class="os"><i class="box"></i>Perp</label><label class="os"><i class="box"></i>Tan</label><label class="os"><i class="box"></i>Quad</label><label class="os"><i class="box"></i>Knot</label><label class="os"><i class="box"></i>Vertex</label><label class="os dim"><i class="box"></i>Project</label><label class="os dim"><i class="box"></i>Disable</label>
</div>

<div class="status">
  <span class="cell">CPlane</span><span class="cell ctr">x -10.659</span><span class="cell ctr">y 4.235</span><span class="cell ctr">z 0.000</span><span class="cell ctr">Millimeters</span><span class="cell layer"><i class="lsw"></i>Bollard</span><span class="cell ctr">Grid Snap</span><span class="cell ctr">Ortho</span><span class="cell ctr">Planar</span><span class="cell ctr act">Osnap</span><span class="cell ctr act">SmartTrack</span><span class="cell ctr act">Gumball</span><span class="cell ctr">Record History</span><span class="cell ctr">Filter</span><span class="cell cpu">CPU use: 4.1 %</span>
</div>

<footer class="taskbar">
  <div class="apps">
    <span class="app sys"><svg viewBox="0 0 24 24"><path d="M2 5l9-1.300V11H2zM12 3.500L22 2v9H12zM2 12h9v7.500L2 18.200zM12 12h10v10l-10-1.500z" fill="#fff"/></svg></span>
    <span class="app sys"><svg viewBox="0 0 24 24"><circle cx="14" cy="9" r="7" fill="none" stroke="#fff" stroke-width="1.300"/><path d="M9 14l-7 8" stroke="#fff" stroke-width="1.300"/></svg></span>
    <span class="app sys"><svg viewBox="0 0 24 24"><path d="M3 7h13v10H3zM3 3h13M3 21h13M20 3v5M20 11v3M20 17v4" fill="none" stroke="#fff" stroke-width="1.300"/></svg></span>
    <span class="app first"><svg viewBox="0 0 30 30"><circle cx="16" cy="15" r="13" fill="#ed6c47"/><path d="M16 2a13 13 0 0 1 13 13H16z" fill="#ff8f6b"/><path d="M16 28a13 13 0 0 0 13-13H16z" fill="#d35230"/><rect x="3" y="8" width="14" height="14" rx="1.500" fill="#c43e1c"/><text x="10" y="19.500" text-anchor="middle" font-family="Liberation Sans,sans-serif" font-size="12" font-weight="700" fill="#fff">P</text></svg></span>
    <span class="app run"><svg viewBox="0 0 30 30"><circle cx="15" cy="15" r="14" fill="#e33b2e"/><path d="M15 15L27 22A14 14 0 0 1 8 27z" fill="#34a853"/><path d="M15 1a14 14 0 0 1 13 20l-13-6z" fill="#fbbc05"/><path d="M15 15L3 8A14 14 0 0 0 8 27z" fill="#34a853"/><circle cx="15" cy="15" r="7" fill="#fff"/><circle cx="15" cy="15" r="5.500" fill="#4285f4"/></svg></span>
    <span class="app run"><svg viewBox="0 0 30 30"><rect x="7" y="2" width="21" height="26" rx="1.500" fill="#2b7cd3"/><rect x="7" y="2" width="21" height="7" fill="#41a5ee"/><rect x="7" y="15" width="21" height="7" fill="#185abd"/><rect x="7" y="22" width="21" height="6" fill="#103f91"/><rect x="2" y="8" width="14" height="14" rx="1.500" fill="#185abd"/><text x="9" y="19.500" text-anchor="middle" font-family="Liberation Sans,sans-serif" font-size="12" font-weight="700" fill="#fff">W</text></svg></span>
    <span class="app"><svg viewBox="0 0 30 30"><rect x="7" y="2" width="21" height="26" rx="1.500" fill="#21a366"/><rect x="17" y="2" width="11" height="7" fill="#33c481"/><rect x="7" y="15" width="21" height="13" fill="#107c41"/><rect x="2" y="8" width="14" height="14" rx="1.500" fill="#0e6b39"/><text x="9" y="19.500" text-anchor="middle" font-family="Liberation Sans,sans-serif" font-size="12" font-weight="700" fill="#fff">X</text></svg></span>
    <span class="app"><svg viewBox="0 0 30 30"><ellipse cx="12" cy="12" rx="11" ry="10" fill="#5ec429"/><path d="M6 19l-1 6 6-4z" fill="#5ec429"/><circle cx="8" cy="9" r="1.500" fill="#2a6a10"/><circle cx="15" cy="9" r="1.500" fill="#2a6a10"/><ellipse cx="21" cy="20" rx="8" ry="7" fill="#f2f2f2"/><path d="M25 25l2 4-6-2z" fill="#f2f2f2"/><circle cx="18" cy="18" r="1.200" fill="#888"/><circle cx="24" cy="18" r="1.200" fill="#888"/></svg></span>
    <span class="app"><svg viewBox="0 0 30 30"><rect x="2" y="1" width="27" height="29" fill="#222"/><path d="M6 4l5 2 7 6 8 2-1 7-7-1-7 7-4-10z" fill="#ddd"/><circle cx="15" cy="15" r="1.500" fill="#c33"/></svg></span>
    <span class="app"><svg viewBox="0 0 30 30"><rect x="2" y="1" width="27" height="29" fill="#cc2020"/><rect x="4" y="3" width="23" height="25" fill="#2a0a08"/><path d="M8 23c4-3 6-9 6-15 0 6 3 11 9 12-6-1-11 0-15 3z" fill="none" stroke="#ff4a38" stroke-width="1.300"/></svg></span>
    <span class="app"><svg viewBox="0 0 30 30"><rect x="2" y="1" width="27" height="29" fill="#ff7c00"/><rect x="4" y="3" width="23" height="25" fill="#2a1000"/><text x="15.500" y="22" text-anchor="middle" font-family="Liberation Sans,sans-serif" font-size="16" fill="#ff9a1a">Ai</text></svg></span>
    <span class="app run"><svg viewBox="0 0 30 30"><path d="M2 3h12l2 3h13v23H2z" fill="#f8c93e"/><path d="M2 3h12l2 3H2z" fill="#e0a020"/><rect x="9" y="18" width="13" height="11" fill="#3aa0e8"/><rect x="13" y="22" width="5" height="7" fill="#f8c93e"/></svg></span>
    <span class="app cur"><svg viewBox="0 0 30 30"><rect x="2" y="1" width="27" height="29" fill="#222"/><path d="M5 26L3 10l6-8 3 5 4-5 2 11 6 4-5 5-4-3-3 5-4-5z" fill="#eee"/><text x="24" y="11" text-anchor="middle" font-family="Liberation Sans,sans-serif" font-size="11" fill="#fff">6</text></svg></span>
  </div>
  <div class="tray">
    <svg class="tr-up" viewBox="0 0 16 16"><path d="M0 12l8-8 8 8" fill="none" stroke="#fff"/></svg>
    <svg class="tr-bat" viewBox="0 0 20 20"><rect x="3" y="6" width="16" height="11" fill="#fff"/><rect x="2" y="1" width="4" height="5" fill="#fff"/></svg>
    <svg class="tr-pen" viewBox="0 0 20 20"><path d="M13 1c-3 5-5 9-8 13-2 3 1 5 3 3 3-4 5-9 6-13M9 11c3-2 7-2 9-4" fill="none" stroke="#fff"/></svg>
    <span class="eng">ENG</span>
    <div class="clock"><span>1:28 PM</span><span>8/6/2020</span></div>
    <div class="notif"><i></i><b>24</b></div>
  </div>
</footer>
</body>
</html>
```
FILE: styles.css
```css
*{box-sizing:border-box}
html,body{margin:0;padding:0}
body{width:1920px;height:1080px;overflow:hidden;background:#eaebef;font-family:"Open Sans","Noto Sans",sans-serif;font-size:14px;color:#111;display:flex;flex-direction:column}
.defs{position:absolute;width:0;height:0}
.title{height:29px;background:#0078d7;color:#fff;display:flex;align-items:center;flex:none}
.app-ico{width:24px;height:24px;margin-left:1px;flex:none}
.title-text{margin-left:2px;font-size:14.250px}
.win{margin-left:auto;display:flex;margin-right:2px}
.win svg{width:60px;height:29px}
.win svg:first-child{width:49px}
.menu{height:23px;background:#fff;flex:none;padding-left:7px;display:grid;grid-template-columns:37px 40px 46px 51px 63px 49px 49px 84px 80px 49px 66px 61px 55px auto;align-items:center;font-size:14px}
.cmd{flex:none;margin:5px 0 0 3px;padding-left:1px;border-left:1px solid #cfd5e3;border-bottom:1px solid #dfe2ea;height:68px}
.hist{height:38px;background:#fff;display:flex;border-bottom:1px solid #b9c1d4}
.hist-text{flex:1;padding:0 0 0 5px;line-height:20px;margin-top:-1px}
.hist-scroll{width:20px;background:#f2f2f2;display:flex;flex-direction:column;align-items:center;margin-right:6px}
.hist-scroll svg{width:14px;height:14px;margin-top:3px;margin-bottom:3px}
.prompt{height:24px;background:#fff;display:flex;align-items:center;padding-left:5px;justify-content:space-between}
.prompt b{margin-bottom:2px}
.spin{display:flex;flex-direction:column;width:18px;margin-right:1px;gap:1px}
.spin i{display:block;height:10px;background:#eee;border:1px solid #aaa;position:relative}
.spin i::after{content:"";position:absolute;left:3px;top:1px;border-left:4px solid transparent;border-right:4px solid transparent}
.sp-u::after{border-bottom:5px solid #111}
.sp-d::after{border-top:5px solid #111}
.tabs-row{flex:none;height:26px;padding:2px 0 0 8px;display:flex;align-items:flex-start;position:relative}
.tabs{display:grid;grid-template-columns:90px 82px 87px 79px 69px 139px 85px 96px 106px 119px 102px 104px 117px 86px 97px;height:24px;flex:1;border-bottom:1px solid #bfc8dc;margin-right:18px}
.tab{position:relative;isolation:isolate;height:24px;margin-right:-9px;padding-left:15px;line-height:23px;background:#bfc8dc;clip-path:polygon(10px 0,calc(100% - 3px) 0,100% 3px,100% 100%,0 100%);font-size:14px}
.tab::before{content:"";position:absolute;inset:1px 1px 1px 1px;background:#d9d9d9;clip-path:polygon(10px 0,100% 0,100% 100%,0 100%);z-index:-1}
.tab.last{margin-right:0}
.tab.on{background:#bfc8dc;clip-path:polygon(0 3px,3px 0,calc(100% - 12px) 0,100% 100%,0 100%);z-index:1}
.tab.on::before{background:#f4f5f8;clip-path:polygon(0 0,calc(100% - 12px) 0,100% 100%,0 100%);bottom:0}
.tabs-gear{width:20px;height:20px;position:absolute;right:0;top:3px}
.t{position:relative;display:flex;align-items:center;justify-content:center}
.t svg{width:24px;height:24px}
.f::after{content:"";position:absolute;right:0;bottom:1px;border-left:6px solid transparent;border-bottom:6px solid #8f8f8f}
.tools{flex:none;height:34px;padding:0 0 3px 9px;display:grid;grid-template-columns:repeat(33,28px);align-items:center}
.tools .t{height:28px}
.work{flex:none;height:800px;display:flex;padding-top:4px;position:relative}
.side{width:60px;flex:none;display:grid;grid-template-columns:28px 28px;grid-auto-rows:28px;align-content:start;padding:10px 0 0 1px;border-right:1px solid #d5d9e3;height:781px;position:relative}
.side::before,.views::before,.layers::before{content:"";position:absolute;top:5px;left:3px;right:3px;height:3px;border:solid #cfd5e3;border-width:1px 0}
.views::before{top:-6px;left:2px;right:0}
.layers::before{top:-6px;left:1px;right:1px}
.side .t svg{width:23px;height:23px}
.views{width:79px;margin-left:4px;height:773px;margin-top:11px;flex:none;display:flex;flex-direction:column;border:1px solid #bfc8dc;border-top:none;position:relative}
.p-head{height:23px;display:flex;position:relative;flex:none;margin:0 -1px}
.ptab,.ltab{display:flex;align-items:center;background:#d9d9d9;height:23px}
.ptab{background:#f4f5f8;width:64px;padding-left:6px;gap:3px;font-size:14px}
.ptab svg{width:18px;height:18px;flex:none}
.rslant{clip-path:polygon(3px 0,calc(100% - 16px) 0,100% 100%,0 100%,0 3px)}
.p-gear{width:18px;height:18px;position:absolute;left:59px;top:4px}
.v-tools{height:151px;background:#f4f5f8;border-top:1px solid #bfc8dc;border-bottom:1px solid #bfc8dc;display:grid;grid-template-columns:28px 28px;grid-auto-rows:30px;flex:none}
.v-tools .t svg{width:21px;height:21px}
.v-list{height:452px;background:#fff;overflow:hidden;padding:218px 0 0;text-align:center;color:#555;font-size:14px;line-height:20px;white-space:normal;flex:none}
.v-list em{display:block;width:74px;margin:0 0 0 2px}
.v-opts{flex:1;background:#f4f5f8;border-top:1px solid #bfc8dc;padding:8px 0 0 9px;display:flex;flex-direction:column;gap:12px;overflow:hidden}
.opt{display:flex;align-items:center;gap:4px;height:16px;white-space:nowrap;font-size:14px;flex:none}
.box{display:block;width:16px;height:16px;border:1px solid #333;background:#fff;flex:none;position:relative}
.off{color:#8e8e8e}
.off .box{border-color:#c9c9c9;background:#f7f7f7}
.center{width:1364px;margin-left:7px;flex:none;display:flex;flex-direction:column}
.vp{height:758px;position:relative;overflow:hidden;border-top:1px solid #bcc4d6;flex:none}
.scene{display:block;width:1364px;height:757px}
.vp-tag{position:absolute;left:0;top:0;width:114px;height:23px;background:#8fa8c8;display:flex;align-items:center;padding-left:10px;font-size:14px;border-bottom-right-radius:2px}
.vp-drop{position:absolute;left:100px;top:2px;height:20px;width:13px;border-left:1px solid #111}
.vp-drop::after{content:"";position:absolute;left:3px;top:6px;border-left:4px solid transparent;border-right:4px solid transparent;border-top:5px solid #111}
.vtabs{height:26px;margin-left:3px;display:grid;grid-template-columns:91px 48px 57px 56px 37px;width:289px}
.vtab{position:relative;isolation:isolate;padding-left:15px;line-height:25px;height:26px;background:#bfc8dc;margin-right:-9px;clip-path:polygon(0 0,100% 0,100% 100%,10px 100%);font-size:14px}
.vtab::before{content:"";position:absolute;inset:0 1px 1px 1px;background:#d9d9d9;clip-path:polygon(0 0,100% 0,100% 100%,10px 100%);z-index:-1}
.vtab.on{z-index:3;padding-left:10px}
.vtab.on::before{background:#f4f5f8}
.vtab.plus{margin-right:0;color:#888;padding-left:17px;font-size:17px}
.vtab.plus::before{background:#eaebef}
.layers{width:396px;margin-left:8px;margin-top:11px;height:772px;flex:none;display:flex;flex-direction:column;border-right:1px solid #bfc8dc;border-left:1px solid #bfc8dc;border-bottom:1px solid #bfc8dc;position:relative}
.l-head{height:23px;display:grid;grid-template-columns:60px 62px 62px 61px 64px 66px;flex:none;position:relative}
.ltab{padding-left:4px;gap:5px;font-size:14px;margin-right:-8px;position:relative;white-space:nowrap}
.ltab.on{background:#f4f5f8;z-index:1}
.ltab svg{width:20px;height:20px;flex:none}
.l-gear{width:20px;height:20px;position:absolute;top:3px;left:375px}
.l-tools{height:32px;background:#f4f5f8;border-top:1px solid #bfc8dc;border-bottom:1px solid #bfc8dc;display:grid;grid-template-columns:repeat(10,28.300px);align-items:center;flex:none}
.l-tools .t svg{width:21px;height:21px}
.l-body{flex:1;background:#fff;overflow:hidden}
.row{display:grid;grid-template-columns:194px 22px 20px 22px 21px 79px 1fr;height:24px;align-items:center;font-size:14px;border-bottom:1px dotted #e6e6e6;white-space:nowrap;overflow:hidden}
.row>svg.c{width:19px;height:19px;justify-self:center}
.row.hdr{height:26px;border-bottom:none}
.row.hdr>span{height:26px;line-height:26px;border-right:1px solid #eeeff2;padding-left:6px}
.row.hdr>span:last-child{border:none}
.nm{padding-left:9px}
.ln{padding-left:5px}
.sw{width:14px;height:14px;background:#000;justify-self:center}
.mat{display:flex;align-items:center;gap:6px;padding-left:3px}
.dot{display:block;width:17px;height:17px;border-radius:50%;border:1px solid #111;flex:none}
.d-none{background:#f6f6f6;border-color:#eee}
.d-white{background:#fff}
.d-tan{background:#8a7a62;border-color:#fff}
.d-gray{background:#666}
.d-brown{background:#85431a}
.d-black{background:#161616}
.row.sel{background:#0078d7;color:#fff;font-weight:700;border:1px dotted #122}
.row.sel .sw{border:1px solid #fff}
.hscroll{height:19px;flex:none;background:#f2f2f2;display:flex;align-items:center}
.hscroll svg{width:22px;height:19px;flex:none}
.thumb-track{flex:1;height:19px}
.thumb{width:254px;height:19px;background:#cdcdcd}
.osnap{flex:none;height:23px;padding-left:12px;display:grid;grid-template-columns:53px 60px 62px 54px 53px 45px 58px 52px 64px 59px 71px 84px auto;align-items:center;font-size:14px}
.os{display:flex;align-items:center;gap:5px;white-space:nowrap}
.os .box{width:16px;height:16px}
.os.on .box::after{content:"";position:absolute;left:3px;top:1px;width:8px;height:11px;border:solid #222;border-width:0 1.400px 1.400px 0;transform:rotate(40deg) scale(.85)}
.os.dim{color:#444}
.os.dim .box{background:#e2e2e2;border-color:#c4c4c4}
.status{flex:none;height:22px;border-top:1px solid #bfc8dc;display:grid;grid-template-columns:59px 108px 108px 109px 107px 208px 82px 54px 57px 57px 91px 71px 114px 49px 638px 1fr;font-size:14px;align-items:stretch;line-height:21px}
.cell{border-right:1px solid #d5d9e3;white-space:nowrap;padding-left:7px}
.ctr{text-align:center;padding:0}
.act{background:#e5f3fb;font-weight:700}
.layer{display:flex;align-items:center;gap:3px;padding-left:6px}
.lsw{display:block;width:13px;height:13px;background:#000}
.cpu{padding-left:2px}
.taskbar{flex:none;height:50px;background:#004275;color:#fff;display:flex;justify-content:space-between}
.apps{display:flex}
.app{width:61.700px;height:50px;display:flex;align-items:center;justify-content:center;position:relative}
.app svg{width:30px;height:30px}
.app.sys{width:60px}
.app.sys svg{width:26px;height:26px}
.app.first{margin-left:3px}
.run::after,.cur::after{content:"";position:absolute;left:5px;right:5px;bottom:0;height:3px;background:#8fbde0}
.cur{background:#0a5a9a}
.cur::after{left:0;right:0}
.tray{display:flex;align-items:center;margin-right:17px}
.tr-up{width:16px;height:16px;margin-right:14px}
.tr-bat{width:20px;height:20px;margin-right:15px}
.tr-pen{width:20px;height:24px;margin-right:19px}
.eng{font-size:14px;margin-right:12px}
.clock{display:flex;flex-direction:column;align-items:center;font-size:14px;line-height:23px;margin-right:38px;width:60px}
.notif{position:relative;width:30px;height:34px}
.notif i{position:absolute;left:3px;top:2px;width:18px;height:20px;background:#fff}
.notif b{position:absolute;left:9px;top:13px;width:22px;height:22px;border-radius:50%;background:#0f5a94;border:1px solid #9cc4e4;font-size:13px;text-align:center;line-height:20px}
```
